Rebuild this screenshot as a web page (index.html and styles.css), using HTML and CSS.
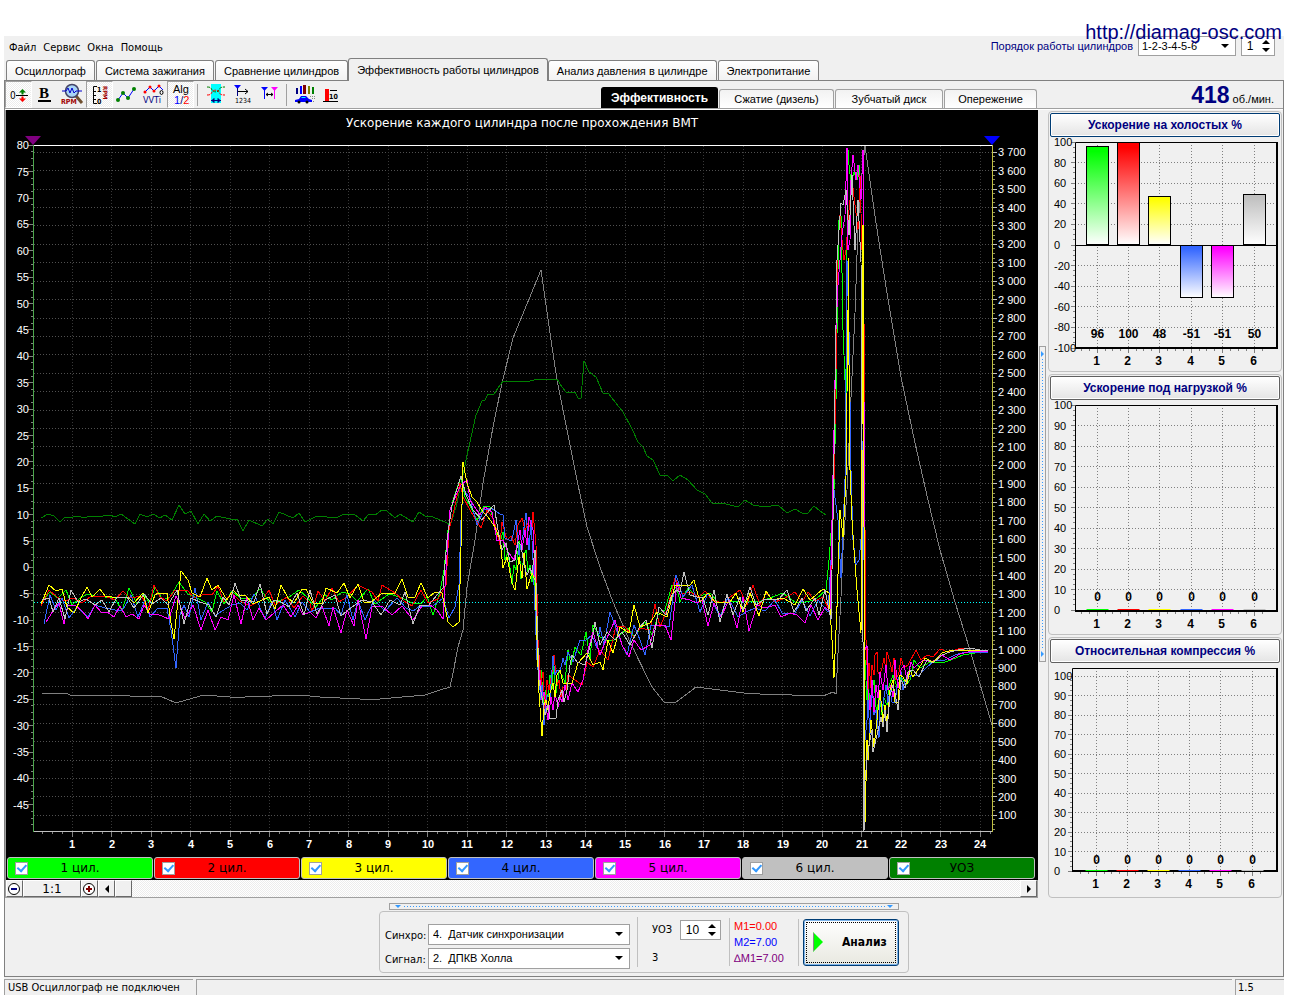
FILE: index.html
```
<!DOCTYPE html>
<html lang="ru">
<head>
<meta charset="utf-8">
<title>Эффективность работы цилиндров</title>
<link rel="stylesheet" href="styles.css">
</head>
<body>
<a class="site" href="http://diamag-osc.com">http://diamag-osc.com</a>
<div class="app">
  <header class="top">
    <nav class="menu">
      <button type="button">Файл</button><button type="button">Сервис</button><button type="button">Окна</button><button type="button">Помощь</button>
    </nav>
    <div class="order">
      <label for="order">Порядок работы цилиндров</label>
      <span class="drop drop-order"><select id="order"><option>1-2-3-4-5-6</option></select></span>
      <span class="spin spin-first"><input type="text" value="1" aria-label="Первый цилиндр"><span class="arrows"><button type="button" class="up" aria-label="Больше"></button><button type="button" class="down" aria-label="Меньше"></button></span></span>
    </div>
  </header>

  <nav class="tabs">
    <button type="button">Осциллограф</button>
    <button type="button">Система зажигания</button>
    <button type="button">Сравнение цилиндров</button>
    <button type="button" class="active">Эффективность работы цилиндров</button>
    <button type="button">Анализ давления в цилиндре</button>
    <button type="button">Электропитание</button>
  </nav>

  <main class="page">
    <div class="bar">
      <div class="tools">
        <button type="button" class="on" aria-label="Сдвиг нуля"><svg width="25" height="25" viewBox="0 0 25 25"><text x="4" y="17" class="i10">0</text><path d="M10 13.500h12" stroke="#000" stroke-width="1"/><path d="M16.500 7l3.500 3.500h-2.500v2h-2v-2H13z" fill="#008000"/><path d="M16.500 20l3.500-3.500h-2.500v-2h-2v2H13z" fill="#f00"/></svg></button>
        <button type="button" aria-label="Толщина линий"><svg width="25" height="25" viewBox="0 0 25 25"><text x="6" y="16" class="ib">B</text><path d="M5 19h13" stroke="#000" stroke-width="2"/></svg></button>
        <button type="button" aria-label="Обороты"><svg width="25" height="25" viewBox="0 0 25 25"><path d="M16 14l6 7" stroke="#705030" stroke-width="3"/><circle cx="12" cy="9" r="6.500" fill="#a8d4f8" stroke="#446" stroke-width="1.500"/><path d="M2 9h4l2-3 2 5 2-5 2 5 2-2h6" fill="none" stroke="#00c" stroke-width="1"/><text x="1" y="22" class="irpm">RPM</text></svg></button>
        <button type="button" class="on" aria-label="Шкала оборотов"><svg width="25" height="25" viewBox="0 0 25 25"><path d="M10 4.500H6.500v17H10M6 9.500h3M6 13.500h3M6 17.500h3" fill="none" stroke="#000"/><text x="10" y="10" class="i7">1</text><text x="10" y="22" class="i7">0</text><text class="irot" transform="translate(16 4) rotate(90)">RPM</text></svg></button>
        <button type="button" aria-label="Точки"><svg width="25" height="25" viewBox="0 0 25 25"><path d="M4 18l5-7 5 5 6-9" fill="none" stroke="#00f"/><g fill="#008000"><circle cx="4" cy="18" r="2"/><circle cx="9" cy="11" r="2"/><circle cx="14" cy="16" r="2"/><circle cx="20" cy="7" r="2"/></g></svg></button>
        <button type="button" aria-label="VVTi"><svg width="25" height="25" viewBox="0 0 25 25"><path d="M4 10l5-5 4 4 5-5 4 4" fill="none" stroke="#00f"/><g fill="#f00"><circle cx="4" cy="10" r="1.500"/><circle cx="9" cy="5" r="1.500"/><circle cx="13" cy="9" r="1.500"/><circle cx="18" cy="4" r="1.500"/></g><ellipse cx="20.500" cy="10.500" rx="1.500" ry="2" fill="none" stroke="#000"/><text x="2" y="21" class="ivv">VVTi</text></svg></button>
        <button type="button" class="on" aria-label="Алгоритм"><svg width="25" height="25" viewBox="0 0 25 25"><text x="5" y="11" class="i11">Alg</text><text x="6" y="22" class="i11"><tspan fill="#00f">1</tspan><tspan fill="#000080">/</tspan><tspan fill="#f00">2</tspan></text></svg></button>
        <i class="sep"></i>
        <button type="button" aria-label="Перекрытие"><svg width="25" height="25" viewBox="0 0 25 25"><path d="M8 2h10v19H8z" fill="#0ff"/><path d="M4 5c4 0 4 1 5 3s6 3 7 0 3-3 6-3" fill="none" stroke="#008000" stroke-dasharray="3 1"/><path d="M4 13c4 0 4-1 5-3s6-3 7 0 3 3 6 3" fill="none" stroke="#f00" stroke-dasharray="3 1"/><path d="M8 18.500h10M9 18.500l2-2v4zM17 18.500l-2-2v4z" stroke="#000080" fill="#000080"/></svg></button>
        <button type="button" aria-label="Порядок"><svg width="25" height="25" viewBox="0 0 25 25"><path d="M4 3h7l-3.500 4z" fill="#00f"/><path d="M7.500 6v8" stroke="#000080"/><path d="M8 9.500h10M15 7l3 2.500-3 2.500" fill="none" stroke="#000"/><text x="5" y="21" class="i7 thin">1234</text></svg></button>
        <button type="button" aria-label="Маркеры"><svg width="25" height="25" viewBox="0 0 25 25"><path d="M4 5h7l-3.500 4z" fill="#00f"/><path d="M7.500 8v9" stroke="#00f"/><path d="M14 5h7l-3.500 4z" fill="#f0f"/><path d="M17.500 8v9" stroke="#f0f"/><path d="M9 12.500h7M11 11l-2 1.500 2 1.500M14 11l2 1.500-2 1.500" fill="none" stroke="#000"/></svg></button>
        <i class="sep"></i>
        <button type="button" aria-label="Гистограмма"><svg width="25" height="25" viewBox="0 0 25 25"><path d="M4 6h2v6H4z" fill="#000080"/><path d="M8 4h2v8H8z" fill="#00f"/><path d="M11 3h3v9h-3z" fill="#800000"/><path d="M16 4h2v8h-2z" fill="#808000"/><path d="M20 5h2v7h-2z" fill="#008000"/><path d="M3 18l4-1 2-3h5l3 3 3 1v2H3z" fill="#00f"/><path d="M9 16l1-1h3l1 1z" fill="#0ff"/><circle cx="7" cy="20" r="1.500"/><circle cx="15" cy="20" r="1.500"/><path d="M18 14.500h5M20 16.500h3M21 19.500h2" stroke="#888" stroke-dasharray="1 1"/></svg></button>
        <button type="button" aria-label="Значения"><svg width="25" height="25" viewBox="0 0 25 25"><path d="M6 7h4v12H6z" fill="#f00"/><path d="M4 19.500h15M11 8.500h7" stroke="#000"/><text x="10" y="17" class="i7">10</text></svg></button>
      </div>
      <nav class="subtabs">
        <button type="button" class="active">Эффективность</button>
        <button type="button">Сжатие (дизель)</button>
        <button type="button">Зубчатый диск</button>
        <button type="button">Опережение</button>
      </nav>
      <p class="rpm"><b>418</b> об./мин.</p>
    </div>

    <div class="work">
      <section class="scope">
        <svg id="scope" class="plot" viewBox="6 110 1032 746" role="img" aria-label="Ускорение каждого цилиндра после прохождения ВМТ"></svg>
        <div class="legend">
          <label class="c1"><input type="checkbox" checked><span>1 цил.</span></label>
          <label class="c2"><input type="checkbox" checked><span>2 цил.</span></label>
          <label class="c3"><input type="checkbox" checked><span>3 цил.</span></label>
          <label class="c4"><input type="checkbox" checked><span>4 цил.</span></label>
          <label class="c5"><input type="checkbox" checked><span>5 цил.</span></label>
          <label class="c6"><input type="checkbox" checked><span>6 цил.</span></label>
          <label class="c7"><input type="checkbox" checked><span>УОЗ</span></label>
        </div>
        <div class="scroll">
          <button type="button" class="zoom" aria-label="Уменьшить"><svg width="14" height="14" viewBox="0 0 14 14"><circle cx="7" cy="7" r="5.500" fill="#fff" stroke="#000"/><path d="M4 7h6" stroke="#000080" stroke-width="2"/></svg></button>
          <output class="ratio">1:1</output>
          <button type="button" class="zoom" aria-label="Увеличить"><svg width="14" height="14" viewBox="0 0 14 14"><circle cx="7" cy="7" r="5.500" fill="#fff" stroke="#000"/><path d="M4 7h6M7 4v6" stroke="#800000" stroke-width="2"/></svg></button>
          <button type="button" class="arrow left" aria-label="Влево"></button>
          <button type="button" class="thumb" aria-label="Ползунок"></button>
          <span class="track"></span>
          <button type="button" class="arrow right" aria-label="Вправо"></button>
        </div>
      </section>
      <div class="vsplit"><i></i></div>
      <aside class="side">
        <section class="group"><button type="button" class="focus">Ускорение на холостых %</button><svg id="idle" class="plot" viewBox="0 0 230 231"></svg></section>
        <section class="group"><button type="button">Ускорение под нагрузкой %</button><svg id="load" class="plot" viewBox="0 0 230 231"></svg></section>
        <section class="group"><button type="button">Относительная компрессия %</button><svg id="comp" class="plot" viewBox="0 0 230 231"></svg></section>
      </aside>
    </div>

    <div class="bottom">
      <div class="hsplit"></div>
      <form class="panel">
        <div class="inputs">
          <label for="sync">Синхро:</label><span class="drop"><select id="sync"><option>4.&nbsp; Датчик синхронизации</option></select></span>
          <label for="signal">Сигнал:</label><span class="drop"><select id="signal"><option>2.&nbsp; ДПКВ Холла</option></select></span>
        </div>
        <div class="advance">
          <label for="uoz">УОЗ</label>
          <span class="spin"><input type="text" id="uoz" value="10"><span class="arrows"><button type="button" class="up" aria-label="Больше"></button><button type="button" class="down" aria-label="Меньше"></button></span></span>
          <span>3</span>
        </div>
        <div class="marks"><span class="m1">M1=0.00</span><span class="m2">M2=7.00</span><span class="md">∆M1=7.00</span></div>
        <div class="run"><button type="button"><svg width="12" height="20" viewBox="0 0 12 20"><path d="M1 0l10 10L1 20z" fill="#0f0"/><path d="M1.500 1v18" stroke="#888"/></svg><span>Анализ</span></button></div>
      </form>
    </div>
  </main>
  <footer class="status"><span class="s1">USB Осциллограф не подключен</span><span class="s2"></span><span class="s3">1.5</span></footer>
</div>
<script src="charts.js"></script>
</body>
</html>
```
FILE: styles.css
```
* { box-sizing: border-box; }
:root {
  --ui: "DejaVu Sans Condensed", "DejaVu Sans", sans-serif;
  --sans: "Liberation Sans", sans-serif;
  --face: #f0f0f0;
  --edge: #808080;
  --soft: #a0a0a0;
  --navy: #000080;
}
body { margin: 0; background: #fff; font: 11px/14px var(--ui); color: #000; position: relative; }
button, input, select { font: inherit; color: inherit; margin: 0; padding: 0; border: 0; background: none; border-radius: 0; }
svg { display: block; }
.site { position: absolute; z-index: 2; right: 14px; top: 21px; font: 20px/23px var(--sans); color: var(--navy); text-decoration: none; }
.app { margin: 36px 12px 0 4px; background: var(--face); display: flex; flex-direction: column; }

.top { display: flex; justify-content: space-between; height: 22px; }
.menu { display: flex; gap: 7px; padding: 2px 0 0 5px; }
.order { display: flex; align-items: flex-start; gap: 5px; padding-right: 9px; color: var(--navy); }
.order label { font: 11px/20px var(--sans); }
.drop { position: relative; display: block; border: 1px solid var(--soft); background: #fff; color: #000; font: 11px/18px var(--sans); }
.drop select { appearance: none; display: block; width: 100%; height: 100%; padding: 0 20px 0 4px; }
.drop::after { content: ""; position: absolute; right: 6px; top: calc(50% - 2px); border: 4px solid transparent; border-top-color: #000; border-bottom: 0; pointer-events: none; }
.drop-order { width: 98px; height: 20px; }
.drop-order select { padding-left: 3px; }
.spin { display: flex; border: 1px solid var(--soft); background: #fff; color: #000; font: 12px/18px var(--sans); width: 41px; height: 20px; }
.spin input { flex: 1; min-width: 0; width: 10px; text-align: center; }
.spin-first { width: 34px; }
.arrows { display: flex; flex-direction: column; align-items: center; justify-content: center; gap: 4px; width: 16px; }
.arrows button { width: 0; height: 0; border: 4px solid transparent; }
.arrows .up { border-bottom-color: #000; border-top: 0; }
.arrows .down { border-top-color: #000; border-bottom: 0; }

.tabs, .subtabs { display: flex; align-items: flex-end; gap: 1px; }
.tabs { height: 23px; padding-left: 2px; position: relative; z-index: 1; }
.tabs button { height: 20px; margin-bottom: 1px; padding: 0 8px; border: 1px solid var(--edge); border-bottom: 0; border-radius: 3px 3px 0 0; background: linear-gradient(#fff, #f2f2f2); font: 11px/18px var(--sans); white-space: nowrap; }
.tabs .active { height: 23px; margin: 0 -1px 0 -1px; background: var(--face); line-height: 21px; }

.page { border: 1px solid var(--edge); margin-top: -1px; display: flex; flex-direction: column; }
.bar { display: flex; height: 29px; border-bottom: 1px solid #fff; box-shadow: inset 0 -1px var(--soft); }
.tools { display: flex; height: 27px; width: 340px; flex: none; }
.tools button { width: 27px; height: 27px; padding: 1px; }
.tools .on { background: conic-gradient(#fff 25%, #ececec 0 50%, #fff 0 75%, #ececec 0) 0 0 / 2px 2px; border: 1px solid; border-color: var(--soft) #fff #fff var(--soft); padding: 0; }
.sep { width: 1px; height: 22px; margin: 3px 4px 0 3px; background: var(--soft); }
.i10 { font: 10px var(--ui); }
.i11 { font: 11px var(--sans); }
.i7 { font: bold 7px var(--ui); }
.i7.thin { font: 7px var(--ui); }
.ib { font: bold 15px "Liberation Serif", serif; }
.irpm { font: bold 7px var(--ui); fill: #a00000; }
.irot { font: bold 6px var(--ui); fill: #a00000; }
.ivv { font: 9px var(--ui); fill: var(--navy); }
.subtabs { flex: 1; padding-left: 256px; margin-bottom: 1px; }
.subtabs button { height: 19px; width: 108px; border: 1px solid var(--soft); border-bottom: 0; border-radius: 3px 3px 0 0; background: linear-gradient(#f2f2f2, #fff); font: 11px/18px var(--sans); white-space: nowrap; }
.subtabs .active { height: 21px; width: 117px; background: #000; color: #fff; font-weight: bold; font-size: 12px; border-color: #000; }
.subtabs button:nth-child(2) { width: 115px; }
.subtabs button:nth-child(4) { width: 93px; }
.rpm { margin: 0; padding: 2px 9px 0 0; font: 11px/24px var(--sans); white-space: nowrap; }
.rpm b { font-size: 23px; color: var(--navy); }

.work { display: flex; align-items: stretch; }
.scope { flex: 1; min-width: 0; background: #000; border-left: 1px solid var(--soft); }
.plot { width: 100%; height: auto; font: 11px var(--sans); }
.legend { display: grid; grid-template-columns: repeat(7, 1fr); gap: 1px; padding: 1px 3px 1px 1px; }
.legend label { display: flex; align-items: center; height: 22px; border: 1px solid #c0c0c0; border-radius: 3px; padding-left: 7px; font: 12px/20px "DejaVu Sans", sans-serif; }
.legend span { flex: 1; text-align: center; padding-right: 20px; }
.legend input { appearance: none; width: 13px; height: 13px; background: #fff; border: 1px solid var(--soft); display: grid; place-items: center; }
.legend input:checked::after { content: ""; width: 4px; height: 7px; border: solid #3399ff; border-width: 0 2px 2px 0; transform: rotate(42deg) translate(-1px, -1px); }
.c1 { background: #0f0; } .c2 { background: #f00; } .c3 { background: #ff0; } .c4 { background: #36f; }
.c5 { background: #f0f; } .c6 { background: #c0c0c0; } .c7 { background: #008000; }
.scroll { display: flex; height: 18px; background: var(--face); border-bottom: 1px solid var(--soft); border-right: 1px solid var(--soft); }
.scroll button, .ratio { border: 1px solid; border-color: #fff #696969 #696969 #fff; background: var(--face); }
.zoom { width: 17px; }
.ratio { width: 58px; text-align: center; font: 12px/16px "DejaVu Sans", sans-serif; }
.arrow { width: 17px; display: grid; place-items: center; }
.arrow::after { content: ""; border: 4px solid transparent; }
.left::after { border-right-color: #000; border-left: 0; }
.right::after { border-left-color: #000; border-right: 0; }
.thumb { width: 17px; }
.track { flex: 1; background: conic-gradient(#fff 25%, #ececec 0 50%, #fff 0 75%, #ececec 0) 0 0 / 2px 2px; }
.vsplit { width: 9px; display: grid; place-items: center; flex: none; }
.vsplit i { width: 7px; height: 316px; border: 1px solid var(--soft); position: relative; background: repeating-linear-gradient(#3399ff 0 1px, transparent 1px 3px) 2px 12px / 1px 290px no-repeat; }
.vsplit i::before, .vsplit i::after { content: ""; position: absolute; left: 1px; border: 3px solid transparent; border-left-color: #3399ff; border-right: 0; }
.vsplit i::before { top: 4px; }
.vsplit i::after { bottom: 4px; }
.side { width: 236px; flex: none; display: flex; flex-direction: column; gap: 2px; padding: 1px 1px 0; }
.group { flex: 1; border: 1px solid #c0c0c0; border-radius: 4px; padding: 1px; }
.group button { display: block; width: 100%; height: 24px; padding: 0; border: 1px solid #606060; border-radius: 2px; box-shadow: inset 0 0 0 1px #fff; background: linear-gradient(#fff, #e4e4e4); font: bold 12px/20px var(--sans); color: var(--navy); }
.group .focus { border-color: #003c74; }
.xl { font-weight: bold; }
.val { font-weight: bold; font-size: 12px; }
.title { font: 12px "DejaVu Sans", sans-serif; }

.bottom { display: flex; flex-direction: column; align-items: center; padding: 5px 0 3px; }
.hsplit { width: 510px; height: 7px; border: 1px solid var(--soft); position: relative; background: repeating-linear-gradient(90deg, #3399ff 0 1px, transparent 1px 3px) 14px 2px / 482px 1px no-repeat; }
.hsplit::before, .hsplit::after { content: ""; position: absolute; top: 1px; border: 3px solid transparent; border-top-color: #3399ff; border-bottom: 0; }
.hsplit::before { left: 5px; }
.hsplit::after { right: 5px; }
.panel { display: flex; align-items: center; width: 530px; height: 62px; margin-top: 1px; border: 1px solid #c0c0c0; border-radius: 4px; padding: 0 8px 0 5px; }
.inputs { display: grid; grid-template-columns: 43px 202px; row-gap: 3px; align-items: center; padding-top: 8px; }
.inputs label { padding-top: 3px; }
.inputs .drop { height: 21px; }
.advance { display: grid; grid-template-columns: 28px 41px; row-gap: 8px; align-items: center; margin-left: 7px; padding: 1px 8px 0 14px; border-left: 1px solid #c0c0c0; height: 50px; }
.marks { display: flex; flex-direction: column; width: 69px; padding-left: 4px; border-left: 1px solid #c0c0c0; font: 11px/16px var(--sans); white-space: nowrap; }
.m1 { color: #f00; } .m2 { color: #00f; } .md { color: #800080; }
.run { border-left: 1px solid #c0c0c0; padding-left: 4px; flex: 1; }
.run button { width: 96px; height: 47px; display: flex; align-items: center; padding-left: 8px; gap: 18px; border: 1px solid #003c74; border-radius: 3px; background: linear-gradient(#fff, #e8e8e0); box-shadow: inset 0 0 0 1px #7eb4ea; outline: 1px dotted #000; outline-offset: -4px; font: bold 12px/16px var(--ui); }

.status { display: flex; gap: 3px; height: 18px; padding-top: 2px; line-height: 15px; }
.status span { border-top: 1px solid var(--soft); }
.s1 { width: 189px; border-left: 1px solid var(--soft); padding-left: 3px; }
.s2 { flex: 1; border-left: 1px solid var(--soft); }
.s3 { width: 49px; border-left: 1px solid var(--soft); padding-left: 2px; }
```
FILE: charts.js
```
const NS = 'http://www.w3.org/2000/svg';
function add(parent, tag, attrs, text) {
  const e = document.createElementNS(NS, tag);
  for (const k in attrs) e.setAttribute(k, attrs[k]);
  if (text !== undefined) e.textContent = text;
  parent.appendChild(e);
  return e;
}
function line(p, x1, y1, x2, y2, stroke, extra) {
  return add(p, 'line', Object.assign({ x1, y1, x2, y2, stroke, 'shape-rendering': 'crispEdges' }, extra));
}
const half = v => Math.floor(v) + 0.5;

/* Main oscillogram: acceleration per cylinder, advance angle and rpm */
const series = [
  ['#808080', '42,693 66,693 70,695 125,695 130,696 160,696 176,703 204,695 230,697 245,697 300,695 320,697 360,699 380,699 425,695 440,690 450,687 453,673 458,647 463,630 467,587 475,540 483,483 493,427 502,383 513,338 541,270 551,340 557,380 567,430 577,480 587,527 600,567 613,602 630,642 652,687 664,702 675,703 696,687 744,693 760,694 823,696 833,692 836,694 838,653 841,597 843,550 847,490 851,397 855,313 858,227 862,173 865,146 876,223 887,293 901,377 915,443 928,500 940,550 955,602 970,650 992,725'],
  ['#008000', '41,518 48,514 54,516 60,522 65,517 73,517 78,516 84,518 90,516 103,516 110,515 115,517 121,514 135,524 140,514 147,517 153,514 160,518 165,515 172,520 179,505 185,514 191,511 198,524 204,514 210,521 217,516 230,519 237,519 243,531 249,520 262,526 268,519 273,524 279,512 293,518 299,513 305,522 317,516 336,518 342,515 354,514 363,521 369,514 375,515 382,510 387,511 395,518 400,514 413,522 419,512 425,516 433,517 447,523 451,523 456,507 462,480 467,455 476,415 482,401 485,400 488,394 494,394 498,388 503,381 530,381 538,379 557,379 562,387 566,392 575,392 578,398 581,398 584,361 589,372 596,377 603,393 608,393 623,412 632,429 638,442 643,447 647,456 653,460 660,475 667,475 673,481 680,475 688,480 697,490 705,494 712,503 722,503 738,507 745,500 753,505 765,507 778,505 787,513 795,509 802,513 808,513 814,506 820,511 826,515'],
  ['#00ff00', '41,602 50,592 58,598 66,590 72,605 80,598 88,594 95,596 105,597 115,598 122,611 129,588 137,604 143,594 150,603 155,587 163,600 170,597 179,582 188,594 195,597 205,602 212,612 217,591 224,604 232,591 240,598 252,598 260,589 270,602 281,600 289,597 299,590 308,598 315,608 325,595 332,600 342,592 350,594 357,601 368,589 375,604 389,594 400,597 412,603 422,603 427,596 433,615 440,592 444,570 448,530 453,500 461,477 465,497 471,508 477,520 484,506 490,507 497,535 500,542 503,532 505,560 508,552 512,584 514,565 516,570 519,541 521,579 524,555 526,550 528,572 530,565 532,582 534,560 537,640 539,690 541,670 544,705 546,690 548,697 550,675 552,690 553,665 556,693 559,672 562,675 565,683 568,650 571,665 575,647 581,655 586,632 590,660 593,625 600,637 606,640 614,640 620,635 628,628 634,637 645,622 652,635 658,615 665,610 672,585 677,588 680,602 688,588 697,597 703,595 710,593 718,602 730,602 745,601 758,602 770,598 783,593 795,602 805,602 815,600 826,590 829,560 832,520 834,490 836,400 838,270 839,220 841,215 843,330 845,380 846,412 847,250 848,150 849,165 851,183 854,172 857,180 859,165 861,200 862,175 863,152 864,500 865,660 867,700 868,680 870,705 872,690 874,680 877,720 879,690 882,715 884,698 887,705 889,686 893,675 897,687 901,677 906,685 910,680 914,660 920,668 930,662 942,663 951,660 963,655 975,653 988,652'],
  ['#ff0000', '41,606 49,590 57,597 65,601 73,598 82,603 91,596 105,596 115,600 123,591 130,598 142,596 148,611 154,585 160,597 167,601 175,590 187,590 194,598 205,594 212,595 218,586 224,602 232,593 240,601 250,606 262,600 269,590 275,605 287,597 294,608 303,596 310,603 312,612 318,591 325,601 332,588 339,602 347,597 358,585 372,592 378,601 382,585 395,593 404,601 412,606 421,590 428,603 438,599 446,585 449,530 454,510 460,483 463,497 470,510 477,522 481,528 487,510 494,520 500,545 502,522 507,540 511,536 515,545 518,525 522,518 525,530 528,523 532,530 533,512 536,545 538,640 541,685 543,672 545,710 547,680 549,690 552,672 554,655 557,685 559,680 561,697 563,687 566,690 568,675 575,680 582,685 587,662 593,667 600,650 608,660 616,626 624,626 634,637 640,628 650,630 655,604 660,627 667,610 672,590 675,578 682,594 690,592 699,597 705,591 712,600 722,603 733,595 740,590 747,605 753,585 760,605 766,593 775,602 785,598 795,592 802,602 808,592 815,601 823,597 830,612 832,560 834,480 836,370 838,245 840,215 842,240 844,260 846,250 849,210 852,180 855,205 858,230 860,175 862,250 864,320 865,530 866,640 868,690 869,663 871,688 872,665 874,675 875,655 877,652 878,672 880,675 882,668 884,658 886,670 887,652 890,662 892,672 894,658 896,680 899,672 901,658 904,668 908,665 916,650 921,660 927,655 933,657 940,649 948,652 958,649 970,648 980,650 988,651'],
  ['#3366ff', '44,624 50,595 56,610 62,598 69,618 77,607 88,617 95,605 105,608 115,610 122,611 131,595 138,617 145,600 150,617 158,608 167,608 171,630 176,668 180,615 184,605 189,617 195,588 201,620 208,602 215,616 222,611 232,605 240,603 247,610 254,594 265,619 272,601 277,620 285,600 295,617 302,602 310,612 320,608 335,608 341,615 347,595 353,620 358,600 365,620 374,600 385,611 397,598 406,608 413,611 420,606 433,606 443,598 449,618 455,607 459,585 461,520 463,490 470,498 477,525 484,510 491,508 497,512 500,514 503,515 505,538 511,541 513,535 516,520 519,555 523,535 526,513 529,550 531,520 533,560 537,660 541,700 542,685 544,725 547,695 550,698 553,656 555,675 557,670 560,672 563,658 565,665 568,652 573,662 580,640 586,640 592,635 597,648 600,627 604,645 610,612 615,625 622,645 627,655 634,625 640,640 645,655 651,625 660,625 669,627 676,575 683,597 692,585 700,612 708,593 720,617 728,597 738,617 746,612 755,608 765,611 775,600 782,613 795,613 802,600 810,616 818,600 828,612 831,560 834,490 838,520 841,578 845,480 847,260 849,330 851,470 853,540 856,565 859,560 861,540 862,440 864,560 865,740 867,720 868,700 870,735 872,680 874,715 876,710 879,738 880,695 882,710 886,685 888,703 890,690 892,702 895,702 898,680 901,672 903,690 905,680 908,678 912,675 919,675 926,668 935,660 945,660 955,655 965,652 975,652 988,652'],
  ['#ff00ff', '46,622 55,608 59,603 64,624 68,605 75,605 83,612 88,619 95,605 101,612 107,612 114,617 120,606 126,617 132,614 139,619 144,605 150,614 157,614 169,619 176,596 180,605 185,619 193,605 201,630 208,610 215,630 221,617 228,620 234,595 241,624 247,597 253,620 259,608 266,620 275,612 283,605 291,617 298,605 303,615 310,612 316,618 322,606 329,626 333,607 341,633 347,610 354,626 358,600 366,639 372,607 382,606 392,615 402,606 413,620 422,606 430,605 437,610 443,619 446,570 450,510 456,495 461,485 467,480 470,500 480,515 485,507 492,512 497,541 503,540 508,552 514,560 517,545 520,530 522,550 525,530 527,545 529,517 533,530 536,600 538,660 542,700 544,692 548,720 551,697 553,710 555,693 558,707 560,697 562,702 565,685 568,700 572,683 578,692 583,680 588,650 593,632 600,655 606,640 615,620 622,645 629,657 634,640 641,650 650,645 655,625 665,625 671,640 677,583 681,598 690,600 697,603 702,600 708,626 714,603 721,617 729,600 737,628 743,597 749,631 757,605 765,608 775,605 781,617 790,613 797,615 805,623 811,605 818,620 825,607 830,612 832,520 834,430 836,330 838,285 842,235 845,215 847,148 848,250 850,240 851,180 853,155 856,180 858,165 861,200 863,150 865,650 867,645 868,690 870,710 872,680 874,712 876,685 878,698 880,672 883,690 886,665 888,690 891,685 893,697 895,660 898,688 901,670 904,665 907,680 911,662 914,668 919,663 924,660 932,662 942,655 950,660 960,654 972,651 988,651'],
  ['#ffff00', '41,604 49,585 56,591 62,589 67,607 74,613 81,598 87,587 92,597 100,589 105,596 112,597 128,597 134,603 143,593 148,613 155,595 158,593 167,593 171,623 174,639 181,571 188,580 192,593 200,597 207,578 212,590 218,585 227,600 233,590 238,595 245,595 253,604 269,597 275,609 281,585 288,598 294,603 302,589 306,589 313,603 322,603 326,588 337,593 344,583 350,598 358,584 364,602 370,603 382,593 395,593 402,579 408,597 415,597 421,583 428,598 435,592 442,593 445,607 448,622 453,627 459,622 461,547 463,462 467,483 472,497 477,502 483,512 488,517 495,527 500,540 503,568 507,557 512,583 515,590 519,557 522,578 524,553 527,589 532,573 535,580 537,640 539,693 542,736 544,705 546,700 548,710 550,693 553,683 555,697 557,675 560,670 563,683 567,683 572,683 578,663 587,653 593,665 600,662 603,670 608,640 613,653 620,627 629,633 634,605 640,627 650,623 657,612 667,617 675,585 690,585 694,580 700,602 708,593 715,602 730,602 736,593 743,612 750,593 759,616 766,591 772,600 783,598 795,605 803,589 810,600 823,589 829,593 832,640 834,678 837,607 840,510 843,537 846,477 848,310 848,258 850,470 852,520 854,550 857,590 861,633 863,225 865,823 867,740 868,760 871,720 874,747 877,720 880,690 883,723 885,705 887,727 890,690 893,680 895,702 898,703 900,675 903,677 907,684 910,670 913,677 919,668 925,658 933,662 942,653 952,650 970,650 988,651'],
  ['#c0c0c0', '42,600 49,598 53,612 59,598 65,619 71,590 78,602 86,599 95,605 102,600 109,612 117,597 127,597 134,608 144,594 152,604 161,598 168,605 177,590 184,624 191,598 200,602 209,605 216,617 223,597 229,605 235,583 241,600 254,602 260,584 267,614 274,600 281,602 289,607 297,593 304,615 310,590 317,614 325,600 335,595 341,616 352,607 362,600 372,602 381,615 390,600 400,605 405,592 413,624 420,605 428,606 437,595 443,588 447,540 452,505 461,476 466,495 473,510 482,520 487,513 494,505 498,530 502,550 506,543 510,562 515,560 518,542 521,545 524,565 527,575 530,568 532,573 535,550 539,680 545,715 548,705 550,719 553,718 556,718 558,700 562,690 564,702 567,690 570,665 572,655 577,662 585,665 593,635 595,622 600,645 607,632 615,640 622,632 630,645 639,628 646,620 652,648 659,607 666,615 671,597 676,590 680,592 684,572 690,595 697,597 703,598 708,615 714,590 720,622 727,594 733,615 740,597 743,610 750,587 756,605 765,599 778,600 787,590 794,612 802,598 806,611 815,598 819,615 825,590 831,620 833,520 835,390 837,260 839,230 841,203 843,205 846,190 849,235 852,175 855,250 858,200 861,262 862,450 864,831 865,780 867,760 869,745 872,730 873,752 877,735 881,717 883,727 885,710 887,732 890,695 893,685 895,693 898,710 901,680 905,688 908,672 913,670 919,677 927,660 933,663 942,655 950,652 958,650 970,648 980,650 988,651']
];

const scope = document.getElementById('scope');
const yL = v => 567.4 - 5.276 * v, yR = v => 833.8 - 0.1842 * v, xT = t => 33 + 39.47 * t;
const grid = { 'stroke-dasharray': '1 2' };
add(scope, 'text', { x: 522, y: 127, fill: '#fff', 'text-anchor': 'middle', class: 'title' }, 'Ускорение каждого цилиндра после прохождения ВМТ');
for (let r = 100; r <= 3700; r += 100) line(scope, 34, half(yR(r)), 992, half(yR(r)), '#505050', grid);
for (let t = 1; t <= 24; t++) line(scope, half(xT(t)), 146, half(xT(t)), 831, '#383838', grid);
line(scope, 34, 602.5, 992, 602.5, '#00ffff', grid);
for (const [stroke, points] of series)
  add(scope, 'polyline', { points, fill: 'none', stroke, 'stroke-width': 1, 'shape-rendering': 'crispEdges' });
line(scope, 33, 145.5, 993, 145.5, '#ffffff');
line(scope, 33, 831.5, 993, 831.5, '#c0c0c0');
line(scope, 33.5, 145, 33.5, 832, '#4ca64c');
line(scope, 992.5, 145, 992.5, 832, '#c0c040');
for (let v = -48.75; v < 80; v += 1.25) line(scope, 31, half(yL(v)), 33, half(yL(v)), '#808080');
for (let v = -45; v <= 80; v += 5) {
  line(scope, 28, half(yL(v)), 33, half(yL(v)), '#808080');
  add(scope, 'text', { x: 29, y: Math.round(yL(v)) + 4, fill: '#fff', 'text-anchor': 'end' }, v);
}
for (let r = 25; r < 3720; r += 25) line(scope, 993, half(yR(r)), 995, half(yR(r)), '#909060');
for (let r = 100; r <= 3700; r += 100) {
  line(scope, 993, half(yR(r)), 997, half(yR(r)), '#c0c0c0');
  const label = r < 1000 ? r : Math.floor(r / 1000) + ' ' + String(r % 1000).padStart(3, '0');
  add(scope, 'text', { x: 998, y: Math.round(yR(r)) + 4, fill: '#fff' }, label);
}
for (let t = 0.25; t < 24.3; t += 0.25) line(scope, half(xT(t)), 832, half(xT(t)), t % 1 ? 834 : 837, '#808080');
for (let t = 1; t <= 24; t++) add(scope, 'text', { x: Math.round(xT(t)), y: 848, fill: '#fff', 'text-anchor': 'middle', class: 'xl' }, t);
add(scope, 'path', { d: 'M25 136h16l-8 9z', fill: '#800080' });
add(scope, 'path', { d: 'M984 136h16l-8 9z', fill: '#0000ff' });

/* Bar charts of the side column */
const colors = ['#00ff00', '#ff0000', '#ffff00', '#3366ff', '#ff00ff', '#c0c0c0'];
function bars(id, o) {
  const s = document.getElementById(id), zero = o.y(0), defs = add(s, 'defs', {});
  for (let v = o.min; v <= 100; v += o.step) {
    const y = half(o.y(v));
    if (y > o.top + 2) line(s, o.left, y, 227, y, '#808080', grid);
    line(s, o.left - 4, y, o.left, y, '#808080');
    for (let k = 1; k < 4 && v < 100; k++) line(s, o.left - 2, half(o.y(v + o.step * k / 4)), o.left, half(o.y(v + o.step * k / 4)), '#808080');
    add(s, 'text', { x: 4, y: Math.round(o.y(v)) + 4 }, v);
  }
  for (let i = 0; i < 6; i++) {
    const x = half(o.x0 + o.dx * i);
    line(s, x, o.top, x, o.bottom, '#808080', grid);
    line(s, x, o.bottom, x, o.bottom + 5, '#808080');
    for (let k = -2; k < 2; k++) line(s, x + 8 * k, o.bottom, x + 8 * k, o.bottom + 3, '#808080');
  }
  add(s, 'path', { d: `M${o.left + 0.5} ${o.bottom + 0.5}V${o.top + 0.5}H228`, fill: 'none', stroke: '#000', 'stroke-width': 1 });
  line(s, 227, o.top, 227, o.bottom + 1, '#000', { 'stroke-width': 2 });
  line(s, o.left, o.bottom, 228, o.bottom, '#000', { 'stroke-width': 2 });
  o.values.forEach((v, i) => {
    const x = half(o.x0 + o.dx * i), a = Math.round(o.y(Math.max(v, 0))), b = Math.round(o.y(Math.min(v, 0)));
    if (v) {
      const g = add(defs, 'linearGradient', { id: id + i, x1: 0, y1: 0, x2: 0, y2: 1 });
      add(g, 'stop', { offset: 0.05, 'stop-color': colors[i] });
      add(g, 'stop', { offset: 1, 'stop-color': '#fff' });
      add(s, 'rect', { x: x - 11, y: a + 0.5, width: 22, height: b - a - 1, fill: `url(#${id + i})`, stroke: '#000' });
    } else add(s, 'rect', { x: x - 11, y: zero - 1, width: 22, height: 1, fill: colors[i] });
    add(s, 'text', { x, y: o.vy, 'text-anchor': 'middle', class: 'val' }, v);
    add(s, 'text', { x: x - 1, y: o.bottom + 17, 'text-anchor': 'middle', class: 'val' }, i + 1);
  });
  if (o.min < 0) line(s, o.left, half(zero), 228, half(zero), '#000');
}
bars('idle', { min: -100, step: 20, left: 25, top: 5, bottom: 211, x0: 47, dx: 31.4, vy: 201, y: v => 108 - 1.03 * v, values: [96, 100, 48, -51, -51, 50] });
bars('load', { min: 0, step: 10, left: 25, top: 5, bottom: 211, x0: 47, dx: 31.4, vy: 201, y: v => 210 - 2.05 * v, values: [0, 0, 0, 0, 0, 0] });
bars('comp', { min: 0, step: 10, left: 22, top: 5, bottom: 208, x0: 46, dx: 31.2, vy: 201, y: v => 208 - 1.95 * v, values: [0, 0, 0, 0, 0, 0] });
```
